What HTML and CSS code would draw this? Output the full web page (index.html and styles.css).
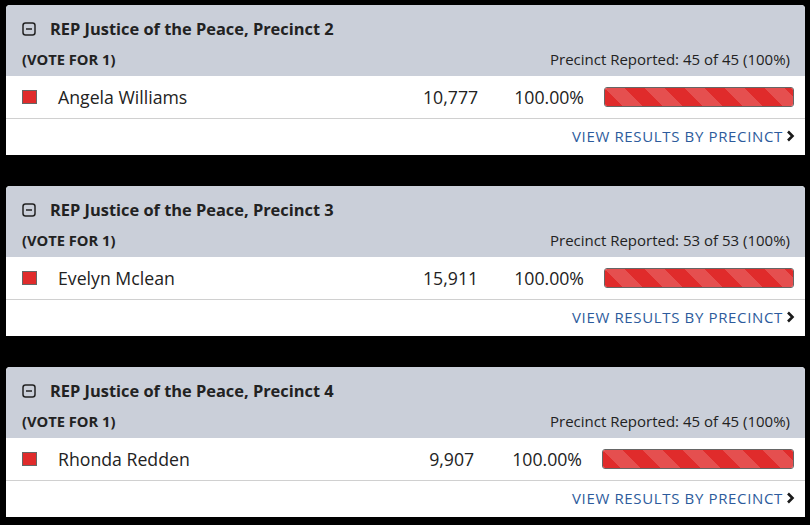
FILE: index.html
```html
<!DOCTYPE html>
<html lang="en">
<head>
<meta charset="utf-8">
<title>Election Results</title>
<link rel="stylesheet" href="styles.css">
</head>
<body>
<div class="races">
  <section class="race">
    <div class="race-head">
      <div class="title-row">
        <svg class="toggle" width="14" height="14" viewBox="0 0 14 14"><rect x="1" y="1" width="12" height="12" rx="2.5" fill="none" stroke="#222" stroke-width="1.5"/><line x1="4" y1="7" x2="10" y2="7" stroke="#222" stroke-width="1.5"/></svg>
        <h2 class="title">REP Justice of the Peace, Precinct 2</h2>
      </div>
      <div class="sub-row">
        <span class="vote-for">(VOTE FOR 1)</span>
        <span class="reported">Precinct Reported: 45 of 45 (100%)</span>
      </div>
    </div>
    <div class="cand-row">
      <span class="swatch"></span>
      <span class="name">Angela Williams</span>
      <span class="votes">10,777</span>
      <span class="pct">100.00%</span>
      <span class="bar"><span class="bar-fill" style="width:100%"></span></span>
    </div>
    <div class="race-foot">
      <a class="view-link" href="#">VIEW RESULTS BY PRECINCT<svg class="chev" width="9" height="12" viewBox="0 0 9 12"><polyline points="2,1.5 6.5,6 2,10.5" fill="none" stroke="#1a1a1a" stroke-width="2.6"/></svg></a>
    </div>
  </section>

  <section class="race">
    <div class="race-head">
      <div class="title-row">
        <svg class="toggle" width="14" height="14" viewBox="0 0 14 14"><rect x="1" y="1" width="12" height="12" rx="2.5" fill="none" stroke="#222" stroke-width="1.5"/><line x1="4" y1="7" x2="10" y2="7" stroke="#222" stroke-width="1.5"/></svg>
        <h2 class="title">REP Justice of the Peace, Precinct 3</h2>
      </div>
      <div class="sub-row">
        <span class="vote-for">(VOTE FOR 1)</span>
        <span class="reported">Precinct Reported: 53 of 53 (100%)</span>
      </div>
    </div>
    <div class="cand-row">
      <span class="swatch"></span>
      <span class="name">Evelyn Mclean</span>
      <span class="votes">15,911</span>
      <span class="pct">100.00%</span>
      <span class="bar"><span class="bar-fill" style="width:100%"></span></span>
    </div>
    <div class="race-foot">
      <a class="view-link" href="#">VIEW RESULTS BY PRECINCT<svg class="chev" width="9" height="12" viewBox="0 0 9 12"><polyline points="2,1.5 6.5,6 2,10.5" fill="none" stroke="#1a1a1a" stroke-width="2.6"/></svg></a>
    </div>
  </section>

  <section class="race">
    <div class="race-head">
      <div class="title-row">
        <svg class="toggle" width="14" height="14" viewBox="0 0 14 14"><rect x="1" y="1" width="12" height="12" rx="2.5" fill="none" stroke="#222" stroke-width="1.5"/><line x1="4" y1="7" x2="10" y2="7" stroke="#222" stroke-width="1.5"/></svg>
        <h2 class="title">REP Justice of the Peace, Precinct 4</h2>
      </div>
      <div class="sub-row">
        <span class="vote-for">(VOTE FOR 1)</span>
        <span class="reported">Precinct Reported: 45 of 45 (100%)</span>
      </div>
    </div>
    <div class="cand-row cand-row--wide-bar">
      <span class="swatch"></span>
      <span class="name">Rhonda Redden</span>
      <span class="votes">9,907</span>
      <span class="pct">100.00%</span>
      <span class="bar"><span class="bar-fill" style="width:100%"></span></span>
    </div>
    <div class="race-foot">
      <a class="view-link" href="#">VIEW RESULTS BY PRECINCT<svg class="chev" width="9" height="12" viewBox="0 0 9 12"><polyline points="2,1.5 6.5,6 2,10.5" fill="none" stroke="#1a1a1a" stroke-width="2.6"/></svg></a>
    </div>
  </section>
</div>
</body>
</html>
```
FILE: styles.css
```css
* { box-sizing: border-box; }

html, body {
  margin: 0;
  background: #000;
}

body {
  padding: 5px 5px 0 6px;
  font-family: "Open Sans", "Noto Sans", "Liberation Sans", sans-serif;
  color: #222;
}

.races {
  display: flex;
  flex-direction: column;
  gap: 31px;
}

.race {
  background: #fff;
  border-radius: 4px 4px 0 0;
  overflow: hidden;
}

.race-head {
  background: #cacfd9;
  padding: 0 15px 0 16px;
}

.title-row {
  display: flex;
  align-items: center;
  gap: 14px;
  padding-top: 12px;
  height: 36px;
}

.toggle {
  flex: none;
  display: block;
}

.title {
  margin: 0;
  font-size: 16.4px;
  font-weight: 700;
  line-height: 24px;
  color: #222;
}

.sub-row {
  display: flex;
  justify-content: space-between;
  align-items: center;
  padding: 7px 0 6px;
  line-height: 22px;
  font-size: 15px;
}

.vote-for {
  font-weight: 700;
  font-size: 14.7px;
}

.cand-row {
  display: flex;
  align-items: center;
  height: 43px;
  padding: 0 11px 0 16px;
  border-bottom: 1px solid #d0d0d0;
  font-size: 17.7px;
}

.swatch {
  flex: none;
  width: 15px;
  height: 14px;
  background: #e02b2b;
  border: 1px solid #666;
  margin-right: 21px;
}

.name {
  flex: 1;
}

.votes {
  text-align: right;
}

.pct {
  margin-left: 36px;
}

.bar {
  flex: none;
  width: 190px;
  height: 20px;
  margin-left: 20px;
  border: 1px solid #666;
  border-radius: 3px;
  background: #eee;
  overflow: hidden;
  display: block;
}

.bar-fill {
  display: block;
  height: 100%;
  background-color: #e02b2b;
  background-image: linear-gradient(45deg,
    rgba(255,255,255,.17) 25%, transparent 25%,
    transparent 50%, rgba(255,255,255,.17) 50%,
    rgba(255,255,255,.17) 75%, transparent 75%, transparent);
  background-size: 40px 40px;
}

.cand-row--wide-bar .pct {
  margin-left: 38px;
}

.cand-row--wide-bar .bar {
  width: 192px;
}

.race-foot {
  display: flex;
  justify-content: flex-end;
  padding: 7px 10px 9px 16px;
  line-height: 20px;
}

.view-link {
  display: flex;
  align-items: center;
  gap: 3px;
  color: #2d5b9c;
  text-decoration: none;
  font-size: 15px;
  letter-spacing: 0.65px;
}

.chev {
  display: block;
}
```
